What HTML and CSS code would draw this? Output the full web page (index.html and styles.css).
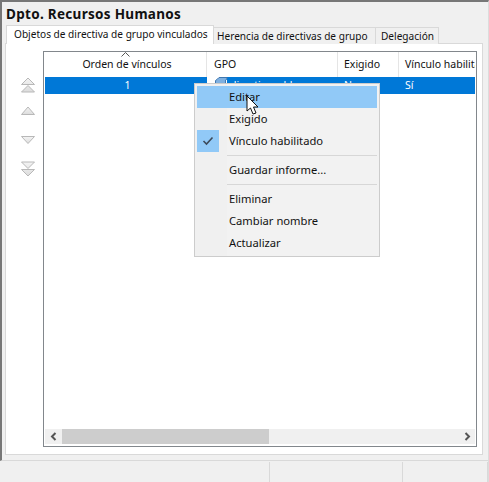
FILE: index.html
```html
<!DOCTYPE html>
<html lang="es">
<head>
<meta charset="utf-8">
<title>Dpto. Recursos Humanos</title>
<link rel="stylesheet" href="styles.css">
</head>
<body>
<div class="window">
  <main class="content">
    <h1 class="title">Dpto. Recursos Humanos</h1>
    <div class="tabs">
      <div class="tab tab-active">Objetos de directiva de grupo vinculados</div>
      <div class="tab tab-second">Herencia de directivas de grupo</div>
      <div class="tab tab-third">Delegación</div>
    </div>
    <div class="panel">
      <div class="arrows">
        <svg class="arrow arrow-a" width="16" height="16" viewBox="0 0 16 16"><defs><linearGradient id="g" x1="0" y1="0" x2="0" y2="1"><stop offset="0" stop-color="#f4f4f4"/><stop offset="1" stop-color="#dcdcdc"/></linearGradient></defs><path d="M8 1 L14.5 7.5 H1.5 Z M8 8.5 L14.5 15 H1.5 Z" fill="url(#g)" stroke="#b8b8b8"/></svg>
        <svg class="arrow arrow-b" width="16" height="10" viewBox="0 0 16 10"><path d="M8 1 L14.5 8.5 H1.5 Z" fill="url(#g)" stroke="#b8b8b8"/></svg>
        <svg class="arrow arrow-c" width="16" height="10" viewBox="0 0 16 10"><path d="M8 8.5 L14.5 1.5 H1.5 Z" fill="url(#g)" stroke="#b8b8b8"/></svg>
        <svg class="arrow arrow-d" width="16" height="16" viewBox="0 0 16 16"><path d="M8 7.5 L14.5 1 H1.5 Z M8 15 L14.5 8.5 H1.5 Z" fill="url(#g)" stroke="#b8b8b8"/></svg>
      </div>
      <div class="list">
        <div class="list-head">
          <div class="col col-order">Orden de vínculos<svg class="sort" width="9" height="5" viewBox="0 0 9 5"><path d="M0.5 4.5 L4.5 0.5 L8.5 4.5" fill="none" stroke="#555"/></svg></div>
          <div class="col col-gpo">GPO</div>
          <div class="col col-req">Exigido</div>
          <div class="col col-link">Vínculo habilitado</div>
        </div>
        <div class="row">
          <div class="cell col-order cell-num">1</div>
          <div class="cell col-gpo cell-gpo"><svg class="gpo-icon" width="14" height="14" viewBox="0 0 14 14"><path d="M3.5 3 L5 1.5 H13 V3 L11.5 4 V12 H1.5 V4.5 Z" fill="#7fb0e0" stroke="#3f77b0"/></svg><span class="gpo-name">directiva rrhh</span></div>
          <div class="cell col-req">No</div>
          <div class="cell col-link">Sí</div>
        </div>
        <div class="list-body"></div>
        <div class="hscroll">
          <div class="sb-btn"><svg width="8" height="9" viewBox="0 0 8 9"><path d="M5.5 1 L2 4.5 L5.5 8" fill="none" stroke="#555" stroke-width="2"/></svg></div>
          <div class="sb-thumb"></div>
          <div class="sb-track"></div>
          <div class="sb-btn"><svg width="8" height="9" viewBox="0 0 8 9"><path d="M2.5 1 L6 4.5 L2.5 8" fill="none" stroke="#555" stroke-width="2"/></svg></div>
        </div>
      </div>
    </div>
  </main>
  <footer class="status">
    <div class="st st-a"></div>
    <div class="st st-b"></div>
    <div class="st st-c"></div>
    <div class="st st-d"></div>
  </footer>
  <div class="menu">
    <div class="mi mi-hot">Editar</div>
    <div class="mi">Exigido</div>
    <div class="mi mi-checked">
      <span class="check"><svg width="12" height="10" viewBox="0 0 12 10"><path d="M1.5 5 L4.5 8 L10.5 1.5" fill="none" stroke="#3d4a5a" stroke-width="1.6"/></svg></span>
      Vínculo habilitado
    </div>
    <div class="sep"></div>
    <div class="mi">Guardar informe...</div>
    <div class="sep"></div>
    <div class="mi">Eliminar</div>
    <div class="mi">Cambiar nombre</div>
    <div class="mi">Actualizar</div>
  </div>
  <svg class="cursor" width="16" height="22" viewBox="0 0 16 22"><path d="M1 1 V16 L4.5 13 L7 19 L10 18 L7.5 12 H12 Z" fill="#fff" stroke="#111" stroke-width="1"/></svg>
</div>
</body>
</html>
```
FILE: styles.css
```css
* { box-sizing: border-box; }
html, body { margin: 0; padding: 0; }
body {
  width: 489px;
  height: 482px;
  overflow: hidden;
  background: #f0f0f0;
  font-family: "Noto Sans", "Open Sans", sans-serif;
  font-size: 10.5px;
  color: #111;
}
.window {
  position: relative;
  width: 489px;
  height: 482px;
  display: flex;
  flex-direction: column;
  border-top: 2px solid #777;
  border-right: 1px solid #dcdcdc;
}
.content {
  height: 459px;
  padding: 0 5px 5px 3px;
  display: flex;
  flex-direction: column;
  border-left: 2px solid #777;
  border-bottom: 1px solid #d9d9d9;
}
.title {
  margin: 0;
  height: 23px;
  padding: 4px 0 0 1px;
  font-size: 13.5px;
  line-height: 16px;
  font-weight: 700;
  letter-spacing: 0.3px;
  color: #111;
}
.tabs {
  display: flex;
  align-items: flex-end;
  height: 19px;
  position: relative;
  z-index: 1;
  margin-bottom: -1px;
}
.tab {
  height: 17px;
  line-height: 16px;
  border: 1px solid #d9d9d9;
  border-bottom: none;
  border-left: none;
  white-space: nowrap;
  padding-left: 3px;
  overflow: hidden;
  font-size: 10.1px;
}
.tab-active {
  width: 208px;
  height: 19px;
  padding-left: 7px;
  margin-left: 1px;
  background: #fff;
  border-left: 1px solid #d9d9d9;
  line-height: 17px;
}
.tab-second { width: 162px; background: #f0f0f0; }
.tab-third { width: 63px; background: #f0f0f0; padding-left: 5px; }
.panel {
  flex: 1;
  background: #fff;
  border: 1px solid #d9d9d9;
  display: flex;
  padding: 7px 5px 7px 0;
}
.arrows {
  width: 37px;
  padding: 26px 0 0 14px;
  display: flex;
  flex-direction: column;
  align-items: flex-start;
  flex: none;
}
.arrow { display: block; }
.arrow-b { margin-top: 13px; }
.arrow-c { margin-top: 19px; }
.arrow-d { margin-top: 16px; }
.list {
  flex: 1;
  border: 1px solid #82878c;
  display: flex;
  flex-direction: column;
  padding: 0 1px;
  min-width: 0;
}
.list-head {
  height: 25px;
  display: flex;
  flex: none;
  line-height: 24px;
}
.row {
  display: flex;
  flex: none;
  height: 17px;
  line-height: 17px;
  background: #0078d7;
  color: #fff;
}
.col, .cell {
  flex: none;
  white-space: nowrap;
  overflow: hidden;
  padding-left: 6px;
}
.col { position: relative; border-right: 1px solid #e5e5e5; height: 25px; }
.col-order { width: 162px; }
.col-order.col, .cell-num { text-align: center; padding-left: 3px; }
.col-gpo { width: 131px; padding-left: 7px; }
.col-req { width: 61px; }
.col-link { flex: 1; min-width: 0; border-right: none; }
.sort { position: absolute; left: 76px; top: 0; }
.cell-gpo {
  display: flex;
  align-items: center;
  background: #fff;
  height: 17px;
}
.gpo-icon { flex: none; margin-right: -1px; position: relative; top: -3px; }
.gpo-name { flex: 1; background: #0078d7; padding-left: 3px; }
.list-body { flex: 1; }
.hscroll {
  height: 15px;
  display: flex;
  flex: none;
  background: #f0f0f0;
  margin-bottom: 2px;
}
.sb-btn {
  width: 17px;
  flex: none;
  display: flex;
  align-items: center;
  justify-content: center;
}
.sb-thumb { width: 207px; background: #cdcdcd; flex: none; }
.sb-track { flex: 1; }
.status { flex: 1; display: flex; padding-top: 1px; }
.st { border-right: 1px solid #d9d9d9; }
.st-a { width: 270px; }
.st-b { width: 133px; }
.st-c { width: 85px; }
.st-d { flex: 1; border-right: none; }
.menu {
  position: absolute;
  left: 194px;
  top: 81px;
  width: 186px;
  height: 174px;
  background: linear-gradient(to right, #f0f0f0 32px, #f2f2f2 32px);
  border: 1px solid #ccc;
  padding: 2px;
  font-size: 11.2px;
}
.mi {
  position: relative;
  height: 22px;
  line-height: 21px;
  padding-left: 32px;
  white-space: nowrap;
}
.mi-hot { background: #91c9f7; }
.check {
  position: absolute;
  left: 0;
  top: 0;
  width: 22px;
  height: 22px;
  background: #91c9f7;
  display: flex;
  align-items: center;
  justify-content: center;
}
.sep {
  height: 1px;
  margin: 3px 0 3px 30px;
  background: #d7d7d7;
}
.cursor {
  position: absolute;
  left: 246px;
  top: 93px;
}
```
